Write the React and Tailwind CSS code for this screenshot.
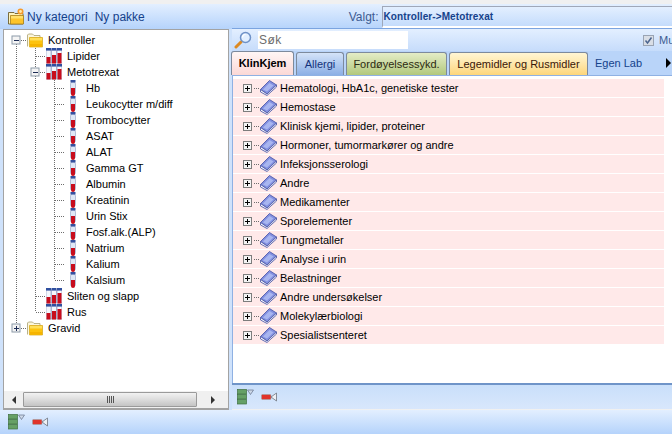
import React from "react";

const FONT = "font-['Liberation_Sans',Arial,sans-serif]";

const treeRows = [
  { label: "Kontroller", icon: "folder", cells: ["minus"] },
  { label: "Lipider", icon: "tubes", cells: ["line", "tee"] },
  { label: "Metotrexat", icon: "tubes", cells: ["line", "minus2"] },
  ...[
    "Hb",
    "Leukocytter m/diff",
    "Trombocytter",
    "ASAT",
    "ALAT",
    "Gamma GT",
    "Albumin",
    "Kreatinin",
    "Urin Stix",
    "Fosf.alk.(ALP)",
    "Natrium",
    "Kalium",
  ].map((label) => ({ label, icon: "tube", cells: ["line", "line", "tee"] })),
  { label: "Kalsium", icon: "tube", cells: ["line", "line", "ell"] },
  { label: "Sliten og slapp", icon: "tubes", cells: ["line", "tee"] },
  { label: "Rus", icon: "tubes", cells: ["line", "ell"] },
  { label: "Gravid", icon: "folder", cells: ["plus"] },
];

const groups = [
  "Hematologi, HbA1c, genetiske tester",
  "Hemostase",
  "Klinisk kjemi, lipider, proteiner",
  "Hormoner, tumormarkører og andre",
  "Infeksjonsserologi",
  "Andre",
  "Medikamenter",
  "Sporelementer",
  "Tungmetaller",
  "Analyse i urin",
  "Belastninger",
  "Andre undersøkelser",
  "Molekylærbiologi",
  "Spesialistsenteret",
];

const Dots = (props) => (
  <line stroke="#6d6d6d" strokeWidth="1" strokeDasharray="1 1" {...props} />
);

const ExpandBox = ({ open, x = 5, y = 4 }) => (
  <g>
    <rect x={x} y={y} width="8" height="8" fill="#f4f4f4" stroke="#8c9aa8" />
    <line x1={x + 2} x2={x + 7} y1={y + 4.5} y2={y + 4.5} stroke="#1d2c55" />
    {!open && <line x1={x + 4.5} x2={x + 4.5} y1={y + 2} y2={y + 7} stroke="#1d2c55" />}
  </g>
);

const TreeCell = ({ type }) => (
  <svg width="19" height="16" className="shrink-0">
    {type === "line" && <Dots x1="9.5" x2="9.5" y1="0" y2="16" />}
    {type === "tee" && (
      <>
        <Dots x1="9.5" x2="9.5" y1="0" y2="16" />
        <Dots x1="10" x2="19" y1="8.5" y2="8.5" />
      </>
    )}
    {type === "ell" && (
      <>
        <Dots x1="9.5" x2="9.5" y1="0" y2="8" />
        <Dots x1="10" x2="19" y1="8.5" y2="8.5" />
      </>
    )}
    {type === "minus" && (
      <>
        <Dots x1="9.5" x2="9.5" y1="12" y2="16" />
        <Dots x1="14" x2="19" y1="8.5" y2="8.5" />
        <ExpandBox open />
      </>
    )}
    {type === "minus2" && (
      <>
        <Dots x1="9.5" x2="9.5" y1="0" y2="16" />
        <Dots x1="14" x2="19" y1="8.5" y2="8.5" />
        <ExpandBox open />
      </>
    )}
    {type === "plus" && (
      <>
        <Dots x1="9.5" x2="9.5" y1="0" y2="4" />
        <Dots x1="14" x2="19" y1="8.5" y2="8.5" />
        <ExpandBox />
      </>
    )}
  </svg>
);

const FolderIcon = () => (
  <svg width="16" height="16" viewBox="0 0 16 16" className="shrink-0">
    <path d="M.5 14.500V3l1-1h4l1.500 1.500h6v2" fill="#fbf6dc" stroke="#a89f70" strokeWidth=".8" />
    <path d="M2.500 5.500h13v9.500h-13z" fill="#fdc30e" stroke="#d6a512" strokeWidth=".7" />
    <rect x="3" y="6" width="12" height="2.500" fill="#ffdf59" />
    <rect x="3" y="12" width="12" height="2.500" fill="#f6b400" />
  </svg>
);

const TubesIcon = () => (
  <svg width="16" height="16" viewBox="0 0 16 16" className="shrink-0">
    {[
      { x: 0, y: 9 },
      { x: 5.5, y: 7 },
      { x: 11, y: 5 },
    ].map((t) => (
      <g key={t.x} transform={`translate(${t.x} 0)`}>
        <rect x="0" y="2" width="5" height="13" fill="#f4f7fc" stroke="#8292bd" strokeWidth=".6" />
        <rect x="0" y="0" width="5" height="2.500" fill="#2f4f9f" />
        <rect x="0.500" y={t.y} width="4" height={15.5 - t.y} fill="#c80d1d" />
      </g>
    ))}
  </svg>
);

const TubeIcon = () => (
  <svg width="16" height="16" viewBox="0 0 16 16" className="shrink-0">
    <g transform="translate(5 0)">
      <rect x="0.500" y="2" width="5" height="12.500" rx="2" fill="#dfe8f6" stroke="#8d9bc0" strokeWidth=".6" />
      <rect x="0.500" y="0" width="5" height="2.500" fill="#34509f" />
      <path d="M1 8h4v6q0 2-2 2t-2-2z" fill="#c80d1d" />
    </g>
  </svg>
);

const BookIcon = () => (
  <svg width="17" height="16" viewBox="0 0 17 16" className="shrink-0">
    <path d="M.5 9.500 9.500.5 16.500 5 7 14z" fill="#8290e0" stroke="#4450a2" strokeWidth=".8" />
    <path d="M3 9.500 9.500 3 13.500 5.500 7 11.500z" fill="#a9b6f0" />
    <path d="M.5 9.500v2.500L7 15.500l9.500-8.500V5L7 14z" fill="#f6f7fd" stroke="#4450a2" strokeWidth=".8" />
  </svg>
);

const FolderStarIcon = () => (
  <svg width="17" height="17" viewBox="0 0 17 17" className="shrink-0">
    <path d="M.5 16V4.500h5.500l1 1h8V16z" fill="#fdf3bd" stroke="#6e5f2a" strokeWidth=".9" />
    <path d="M2.500 7.500h13V16h-13z" fill="#fdc42a" stroke="#a8811c" strokeWidth=".8" />
    <rect x="3" y="8" width="12" height="2.500" fill="#ffe06a" />
    <circle cx="12.500" cy="3.500" r="3" fill="#f59a2b" />
    <circle cx="12.500" cy="3.500" r="1.400" fill="#ffe9a8" />
  </svg>
);

const MagnifierIcon = () => (
  <svg width="18" height="18" viewBox="0 0 18 18" className="shrink-0">
    <line x1="2" y1="16" x2="7" y2="11" stroke="#dd8a22" strokeWidth="3" strokeLinecap="round" />
    <circle cx="11.500" cy="6.500" r="5" fill="#e2efff" stroke="#6f92c7" strokeWidth="1.500" />
    <path d="M8.500 6.500a3 3 0 0 1 3-3" fill="none" stroke="#fff" strokeWidth="1.200" />
  </svg>
);

const ColumnsIcon = () => (
  <svg width="17" height="16" viewBox="0 0 17 16" className="shrink-0">
    {[0.5, 5.5, 10.5].map((y) => (
      <rect key={y} x="0.500" y={y} width="9" height="4.500" fill="#66a066" stroke="#3f6f3f" strokeWidth=".7" />
    ))}
    <path d="M10.500 1h6l-3 4.500z" fill="#cdd8e8" stroke="#66738a" strokeWidth=".7" />
  </svg>
);

const SyringeIcon = () => (
  <svg width="16" height="10" viewBox="0 0 16 10" className="shrink-0">
    <rect x="0.500" y="2.500" width="9.500" height="5" rx="1" fill="#e0342b" stroke="#a0a0a0" strokeWidth=".6" />
    <path d="M10 5 15.500 1v8z" fill="#eef0f5" stroke="#6d7480" strokeWidth=".8" />
  </svg>
);

const tabs = [
  { label: "Allergi", cls: "w-[48px] from-[#d4e3f8] to-[#8cafe5]", text: "text-[#15327a]" },
  { label: "Fordøyelsessykd.", cls: "w-[101px] from-[#e4ecc6] to-[#b2c87c]", text: "text-[#2c2a10]" },
  { label: "Legemidler og Rusmidler", cls: "w-[139px] from-[#fff6d4] to-[#fdd67a]", text: "text-[#3a1608]" },
];

export default function App() {
  const iconFor = { folder: <FolderIcon />, tubes: <TubesIcon />, tube: <TubeIcon /> };

  return (
    <div className={`${FONT} w-[672px] h-[434px] overflow-hidden bg-[#f0f0f0] text-[11px] text-black flex flex-col`}>
      {/* top toolbar */}
      <div className="mt-[4px] h-[25px] shrink-0 bg-gradient-to-b from-[#e3efff] to-[#b5d3fb] flex items-center pl-[8px] text-[12px]">
        <FolderStarIcon />
        <span className="ml-[2px] text-[#15428b]">Ny kategori</span>
        <span className="ml-[7px] text-[#15428b]">Ny pakke</span>
        <span className="ml-[204px] text-[#3d5c92]">Valgt:</span>
        <div className="ml-[3px] flex-1 h-[22px] border-t border-l border-[#a0a8b8] border-b-2 border-b-white bg-gradient-to-b from-[#e3efff] to-[#c4dcfc] flex items-center pl-[1px]">
          <span className="font-bold text-[10px] tracking-[0.1px] text-[#15428b]">Kontroller-&gt;Metotrexat</span>
        </div>
      </div>

      <div className="flex flex-1 min-h-0">
        {/* left tree */}
        <div className="w-[232px] shrink-0 bg-[#cfe2fb] pl-[3px] pr-[3px] flex flex-col">
          <div className="h-[381px] border-2 border-t border-[#a3a3a3] border-l-[1px] border-r-[1px] bg-white flex flex-col">
            <div className="flex-1 pt-[2px] pl-[3px] flex flex-col overflow-hidden">
              {treeRows.map((row) => (
                <div key={row.label} className="h-[16px] shrink-0 flex items-center">
                  {row.cells.map((c, i) => (
                    <TreeCell key={i} type={c} />
                  ))}
                  <span className="ml-[1px] flex">{iconFor[row.icon]}</span>
                  <span className="ml-[5px]">{row.label}</span>
                </div>
              ))}
            </div>
            {/* scrollbar */}
            <div className="h-[17px] shrink-0 bg-[#f0f0f0] flex items-center">
              <span className="w-[19px] flex justify-center">
                <span className="border-y-[4px] border-y-transparent border-r-[4px] border-r-[#333]" />
              </span>
              <div className="w-[174px] h-[15px] rounded-[1px] border border-[#9a9a9a] bg-gradient-to-b from-[#f2f2f2] via-[#dcdcdc] to-[#c4c4c4] flex items-center justify-center gap-[1px]">
                <span className="w-[1px] h-[7px] bg-[#555]" />
                <span className="w-[1px] h-[7px] bg-[#555]" />
                <span className="w-[1px] h-[7px] bg-[#555]" />
                <span className="w-[1px] h-[7px] bg-[#555]" />
              </div>
              <span className="flex-1 flex justify-center">
                <span className="border-y-[4px] border-y-transparent border-l-[4px] border-l-[#333]" />
              </span>
            </div>
          </div>
        </div>

        {/* right panel */}
        <div className="flex-1 min-w-0 flex flex-col border-t border-[#7ba4e0] -mt-[1px] h-[381px]">
          {/* search row */}
          <div className="h-[22px] shrink-0 bg-gradient-to-b from-[#e3efff] to-[#c6dcfb] flex items-center pl-[2px]">
            <MagnifierIcon />
            <div className="ml-[6px] w-[150px] h-[18px] bg-white flex items-center pl-[1px] text-[12px] text-[#6d6d6d] tracking-[0.5px]">Søk</div>
            <div className="ml-auto mr-[19px] flex items-center gap-[5px] w-[10px]">
              <span className="w-[11px] h-[11px] shrink-0 border border-[#9aa4b4] bg-[#d9dee6] flex items-center justify-center">
                <svg width="9" height="9" viewBox="0 0 9 9">
                  <path d="M1.500 4.500 3.500 7 7.500 1.500" fill="none" stroke="#4c6590" strokeWidth="1.500" />
                </svg>
              </span>
              <span className="text-[#3d5c92]">Mu</span>
            </div>
          </div>

          {/* tabs */}
          <div className="h-[25px] shrink-0 bg-[#b9d4f9] flex items-end gap-[2px] border-b border-[#8fb1e3]">
            <div className="w-[63px] h-[24px] -ml-[1px] rounded-t-[3px] border border-b-0 border-[#7d8a9c] bg-gradient-to-b from-[#fff6f5] to-[#fbd8d6] flex items-center justify-center font-bold">
              KlinKjem
            </div>
            {tabs.map((t) => (
              <div
                key={t.label}
                className={`${t.cls} ${t.text} h-[23px] rounded-t-[3px] border border-b-0 border-[#7d8a9c] bg-gradient-to-b flex items-center justify-center`}
              >
                {t.label}
              </div>
            ))}
            <div className="h-[23px] pl-[5px] flex items-center text-[#15428b]">Egen Lab</div>
            <span className="ml-auto mb-[7px] mr-[1px] border-y-[5px] border-y-transparent border-l-[5px] border-l-black" />
          </div>

          {/* groups list */}
          <div className="flex-1 min-h-0 bg-white border-l border-[#8fb1e3] pt-[3px] flex flex-col gap-[1px] pr-[8px]">
            {groups.map((g) => (
              <div key={g} className="h-[18px] shrink-0 bg-[#ffe9e9] flex items-center pl-[10px]">
                <svg width="17" height="16" className="shrink-0">
                  <Dots x1="11" x2="17" y1="8.500" y2="8.500" />
                  <rect x="0.500" y="4.500" width="8" height="8" fill="#f4f4f4" stroke="#7d7d7d" />
                  <line x1="2" x2="7" y1="8.500" y2="8.500" stroke="#000" />
                  <line x1="4.500" x2="4.500" y1="6" y2="11" stroke="#000" />
                </svg>
                <BookIcon />
                <span className="ml-[3px]">{g}</span>
              </div>
            ))}
          </div>

          {/* inner bottom bar */}
          <div className="h-[26px] shrink-0 border-t-2 border-[#6f94c8] bg-gradient-to-b from-[#c9dffa] to-[#d8e7fc] flex items-center pl-[5px] gap-[7px]">
            <ColumnsIcon />
            <SyringeIcon />
          </div>
        </div>
      </div>

      {/* bottom bar */}
      <div className="h-[24px] shrink-0 bg-gradient-to-b from-[#e3efff] to-[#b5d3fb] flex items-center pl-[8px] gap-[7px]">
        <ColumnsIcon />
        <SyringeIcon />
      </div>
    </div>
  );
}
